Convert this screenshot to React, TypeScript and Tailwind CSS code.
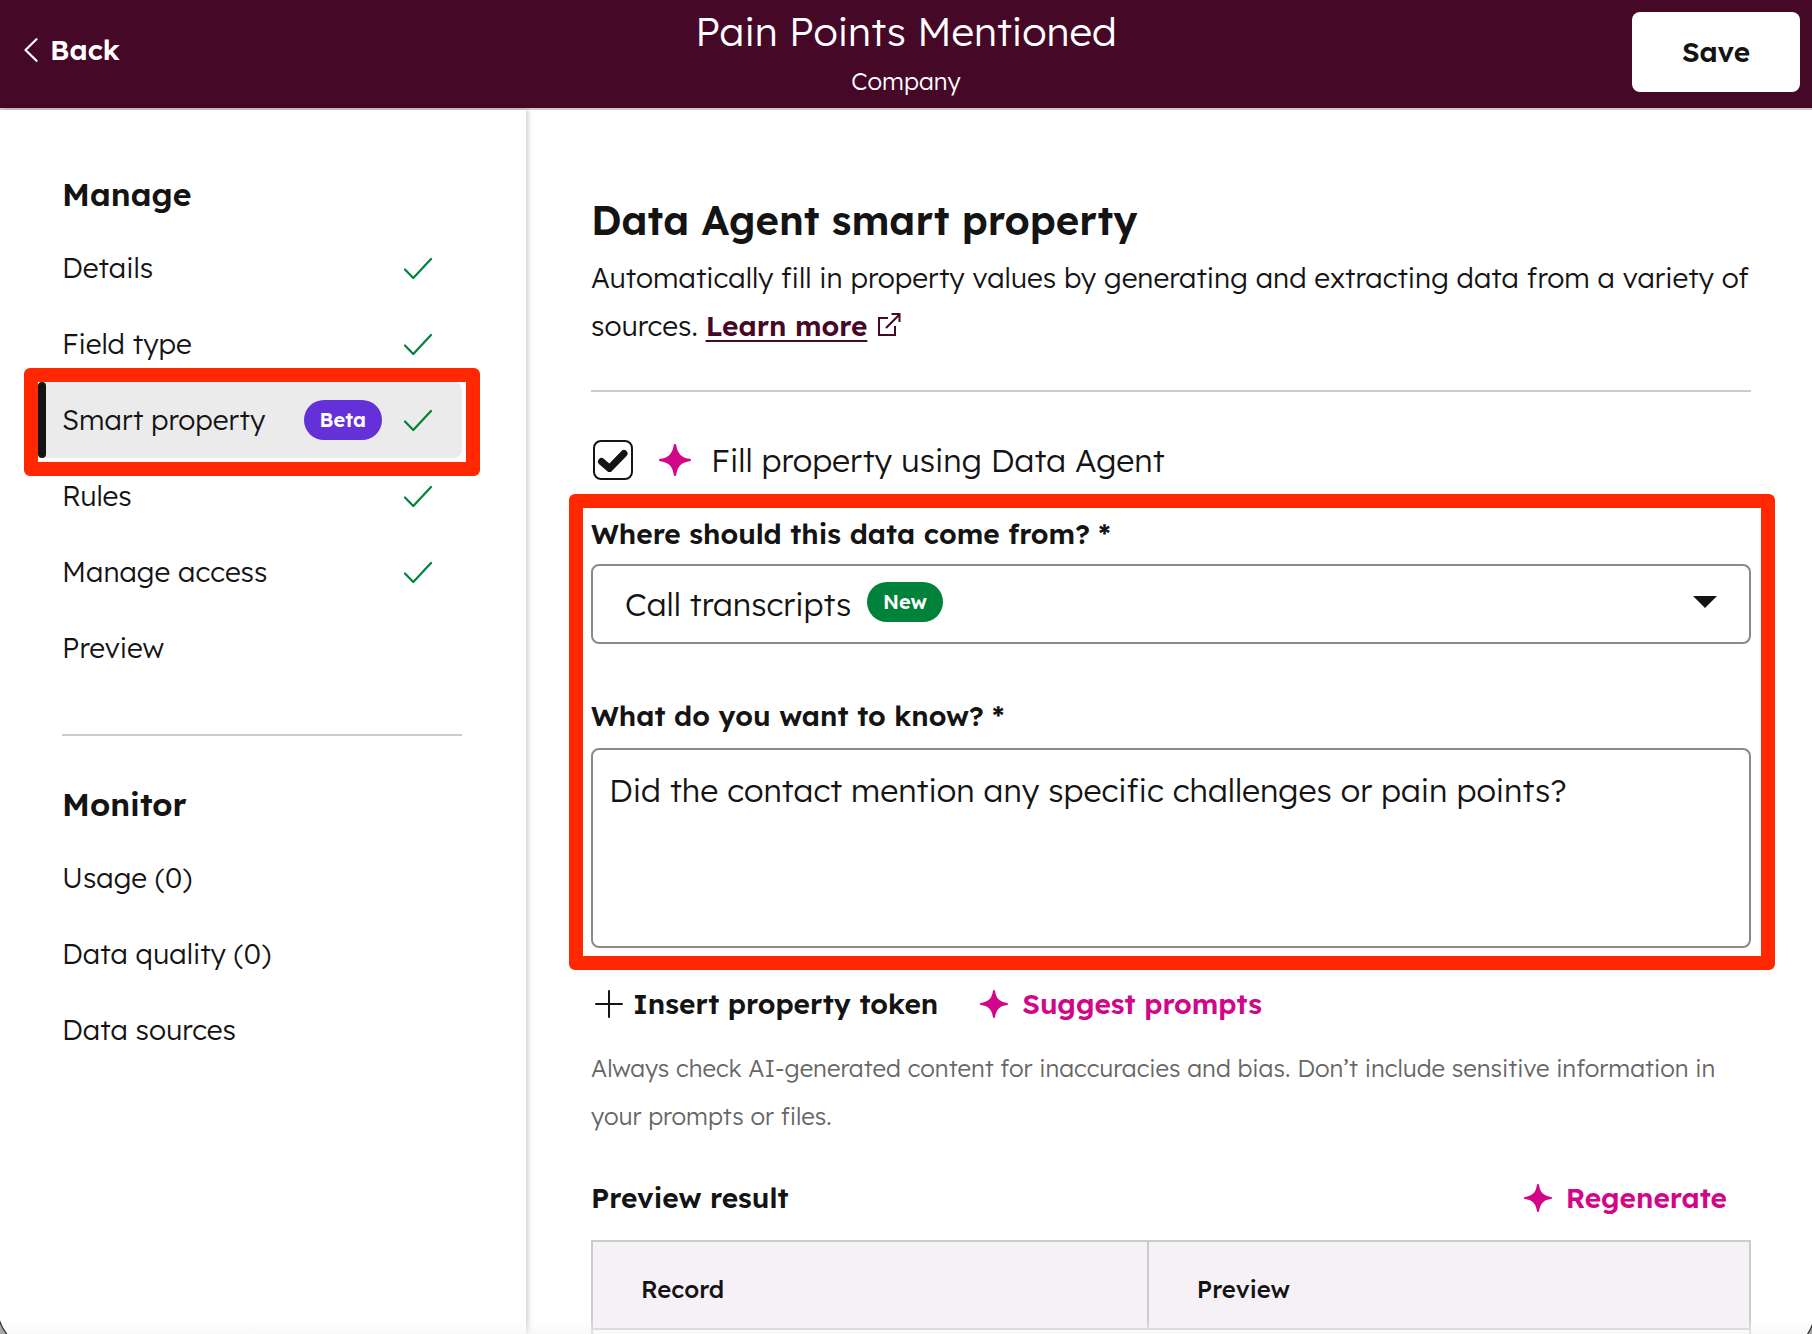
import { useState } from 'react'

type NavItem = { label: string; done?: boolean; badge?: string; active?: boolean }

const manageItems: NavItem[] = [
  { label: 'Details', done: true },
  { label: 'Field type', done: true },
  { label: 'Smart property', done: true, badge: 'Beta', active: true },
  { label: 'Rules', done: true },
  { label: 'Manage access', done: true },
  { label: 'Preview' },
]

const monitorItems: NavItem[] = [
  { label: 'Usage (0)' },
  { label: 'Data quality (0)' },
  { label: 'Data sources' },
]

function Sparkle({ className }: { className: string }) {
  return (
    <svg className={className} viewBox="0 0 32 32" fill="#d20688" aria-hidden="true">
      <path d="M16 0c.7 0 1.100.4 1.200 1.100.6 4 1.800 7.500 4.300 9.800s5.800 3.500 9.300 3.900c.8.1 1.200.6 1.200 1.200s-.4 1.100-1.200 1.200c-3.500.4-6.800 1.600-9.300 3.900s-3.700 5.800-4.300 9.800c-.1.700-.5 1.100-1.200 1.100s-1.100-.4-1.200-1.100c-.6-4-1.800-7.500-4.300-9.800s-5.800-3.500-9.300-3.900C.4 17.100 0 16.600 0 16s.4-1.100 1.200-1.200c3.500-.4 6.800-1.600 9.300-3.900s3.700-5.800 4.300-9.800C14.900.4 15.300 0 16 0z" />
    </svg>
  )
}

function NavList({ title, items }: { title: string; items: NavItem[] }) {
  return (
    <section>
      <h2 className="pl-6 text-[32px] leading-10 font-semibold">{title}</h2>
      <ul className="mt-4">
        {items.map(item => (
          <li key={item.label} className="relative">
            <a
              href="#"
              aria-current={item.active ? 'page' : undefined}
              className={`flex h-19 items-center rounded-lg pr-7.5 text-[28px] font-light ${
                item.active ? 'bg-[#ebebeb]' : 'pl-6'
              }`}
            >
              {item.active && <span className="mr-4 w-2 self-stretch rounded-full bg-[#141414]" />}
              <span className="flex-1">{item.label}</span>
              {item.badge && (
                <span className="mr-5.5 flex h-10 items-center rounded-full bg-[#6431d9] px-4 text-xl font-semibold text-white">
                  {item.badge}
                </span>
              )}
              {item.done && (
                <svg className="h-6 w-7" viewBox="0 0 28 24" fill="none" stroke="#00823a" strokeWidth="2.2" aria-hidden="true">
                  <path d="M1 13.500 9.300 22 27 3" strokeLinecap="round" strokeLinejoin="round" />
                </svg>
              )}
            </a>
            {item.active && (
              <div className="pointer-events-none absolute -top-3.5 -right-4.5 -bottom-4.5 -left-3.5 z-10 rounded-md border-14 border-[#ff2800]" />
            )}
          </li>
        ))}
      </ul>
    </section>
  )
}

export default function App() {
  const [enabled, setEnabled] = useState(true)
  const [prompt, setPrompt] = useState('Did the contact mention any specific challenges or pain points?')

  return (
    <div className="relative flex h-screen flex-col overflow-hidden bg-white font-['Lexend','Inter',sans-serif] text-[#141414]">
      <header className="grid h-[110px] shrink-0 grid-cols-[1fr_auto_1fr] items-center border-b-2 border-[#ccc] bg-[#450827] text-white">
        <button className="flex items-center gap-3 justify-self-start pb-2 pl-6 text-[28px] font-semibold">
          <svg className="h-6 w-3.5" viewBox="0 0 14 24" fill="none" stroke="currentColor" strokeWidth="2.200" aria-hidden="true">
            <path d="M12.500 1.200 1.500 12l11 10.800" strokeLinecap="round" strokeLinejoin="round" />
          </svg>
          Back
        </button>
        <div className="pt-0.5 text-center">
          <h1 className="text-[40px] leading-14 font-light">Pain Points Mentioned</h1>
          <p className="pb-1 text-2xl leading-11 font-light">Company</p>
        </div>
        <button className="mr-3 mb-1 h-20 w-42 justify-self-end rounded-lg bg-white text-[28px] font-semibold text-[#141414]">
          Save
        </button>
      </header>

      <div className="flex min-h-0 flex-1">
        <aside className="w-[526px] shrink-0 pt-16 pr-16 pl-[38px] shadow-[2px_0_5px_rgba(0,0,0,0.2)]">
          <NavList title="Manage" items={manageItems} />
          <hr className="mt-12 mb-12 ml-6 border-t-2 border-[#ccc]" />
          <NavList title="Monitor" items={monitorItems} />
        </aside>

        <main className="min-w-0 flex-1 pt-19.5 pr-[61px] pl-[65px]">
          <h2 className="mb-0.5 text-[40px] leading-16 font-semibold">Data Agent smart property</h2>
          <p className="text-[28px] leading-12 font-light">
            Automatically fill in property values by generating and extracting data from a variety of sources.{' '}
            <a href="#" className="font-semibold text-[#450827] underline decoration-2 underline-offset-4">
              Learn more
            </a>
            <svg className="ml-2.5 inline h-6 w-6 align-baseline" viewBox="0 0 24 24" fill="none" stroke="#450827" strokeWidth="2" aria-hidden="true">
              <path d="M11 6H2v17h16v-9M9 16 22 3M14.500 2H22.500V10" />
            </svg>
          </p>
          <hr className="mt-10 border-t-2 border-[#ccc]" />

          <div className="mt-12 flex h-10 items-center">
            <span className="relative flex">
              <input
                id="fill-property"
                type="checkbox"
                checked={enabled}
                onChange={e => setEnabled(e.target.checked)}
                className="ml-0.5 h-10 w-10 appearance-none rounded-lg border-2 border-[#141414] bg-white"
              />
              {enabled && (
                <svg className="pointer-events-none absolute top-2 left-1.5 h-6 w-8" viewBox="0 0 32 24" fill="none" stroke="#141414" strokeWidth="7" aria-hidden="true">
                  <path d="M4.500 13.500 12.500 20.500 27 5.500" strokeLinecap="round" />
                </svg>
              )}
            </span>
            <label htmlFor="fill-property" className="flex items-center gap-5 pl-6.5 text-[32px] font-light">
              <Sparkle className="h-8 w-8" />
              Fill property using Data Agent
            </label>
          </div>

          <div className="relative mt-8.5 flex flex-col">
            <div className="pointer-events-none absolute -top-5 -right-6 -bottom-5.5 -left-5.5 z-10 rounded-md border-14 border-[#ff2800]" />
            <label htmlFor="source" className="mb-2.5 text-[28px] leading-10 font-semibold">
              Where should this data come from? *
            </label>
            <div className="relative">
              <select
                id="source"
                className="block h-20 w-full appearance-none rounded-lg border-2 border-[#8a8a8a] bg-white pl-8 text-[32px] font-light"
              >
                <option>Call transcripts</option>
              </select>
              <span className="pointer-events-none absolute top-4.5 left-69 flex h-10 items-center rounded-full bg-[#00823a] px-4 text-xl font-semibold text-white">
                New
              </span>
              <svg className="pointer-events-none absolute top-8 right-8.5 h-3 w-6" viewBox="0 0 24 12" fill="#141414" aria-hidden="true">
                <path d="M0 0h24L12 12z" />
              </svg>
            </div>
            <label htmlFor="question" className="mt-13 mb-3 text-[28px] leading-10 font-semibold">
              What do you want to know? *
            </label>
            <textarea
              id="question"
              value={prompt}
              onChange={e => setPrompt(e.target.value)}
              className="h-50 resize-none rounded-lg border-2 border-[#8a8a8a] bg-white px-4 py-4 text-[32px] leading-12 font-light"
            />
          </div>

          <div className="mt-9 flex items-center gap-10.5 text-[28px] leading-10 font-semibold">
            <button className="flex items-center gap-2.5 pl-1">
              <svg className="h-7 w-7" viewBox="0 0 28 28" fill="none" stroke="currentColor" strokeWidth="2" aria-hidden="true">
                <path d="M14 1v26M1 14h26" strokeLinecap="round" />
              </svg>
              Insert property token
            </button>
            <button className="flex items-center gap-3.5 text-[#d20688]">
              <Sparkle className="h-7 w-7" />
              Suggest prompts
            </button>
          </div>
          <p className="mt-5 text-2xl leading-12 font-light text-[#666]">
            Always check AI-generated content for inaccuracies and bias. Don’t include sensitive information in your prompts or files.
          </p>

          <div className="mt-8.5 flex items-center justify-between pr-6 text-[28px] leading-12 font-semibold">
            <h3>Preview result</h3>
            <button className="flex items-center gap-3.5 text-[#d20688]">
              <Sparkle className="h-7 w-7" />
              Regenerate
            </button>
          </div>
          <table className="mt-4.5 w-full table-fixed border-collapse border-2 border-[#ccc] text-left">
            <thead className="bg-[#f6f1f7] text-2xl">
              <tr className="h-22">
                <th className="w-[48%] border-2 border-[#ccc] pt-2 pl-12 font-medium">Record</th>
                <th className="border-2 border-[#ccc] pt-2 pl-12 font-medium">Preview</th>
              </tr>
            </thead>
            <tbody>
              <tr className="h-22">
                <td colSpan={2} />
              </tr>
            </tbody>
          </table>
        </main>
      </div>

      {/* Window edge: soft fade and the rounded corners */}
      <div className="pointer-events-none absolute inset-x-0 bottom-0 h-4 bg-linear-to-b from-transparent to-[#f4f4f4]/60" />
      <svg className="absolute bottom-0 left-0 h-4 w-2" viewBox="0 0 8 16" fill="#a8a8a8" stroke="#333" strokeWidth="1.200" aria-hidden="true">
        <path d="M-1 1Q1.500 10 7.500 17H-1z" />
      </svg>
      <svg className="absolute right-0 bottom-0 h-3 w-2" viewBox="0 0 8 12" fill="#a8a8a8" stroke="#333" strokeWidth="1.200" aria-hidden="true">
        <path d="M9 1Q6.500 8 3 13H9z" />
      </svg>
    </div>
  )
}
